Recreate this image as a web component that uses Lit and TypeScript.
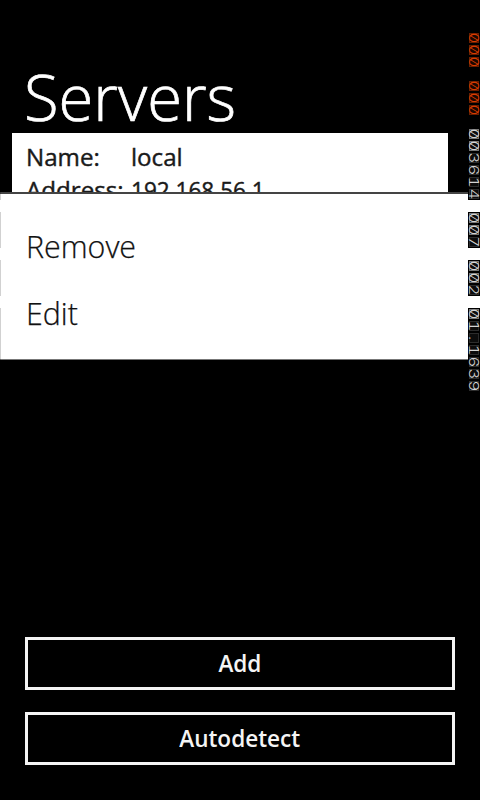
import { LitElement, html, css } from "lit";
import { customElement } from "lit/decorators.js";

type Counter = { value: string; tone: string };

const counters: Counter[] = [
  { value: "000", tone: "hot" },
  { value: "000", tone: "hot" },
  { value: "003614", tone: "" },
  { value: "007", tone: "" },
  { value: "002", tone: "" },
  { value: "01.1639", tone: "" },
];

@customElement("frame-counters")
class FrameCounters extends LitElement {
  static styles = css`
    :host {
      display: flex;
      flex-direction: column;
      gap: 12px;
      width: 12px;
    }
    .counter {
      position: relative;
      display: flex;
      flex-direction: column;
      background: #000;
      color: #d4d4d4;
    }
    .counter::before {
      content: "";
      position: absolute;
      left: -468px;
      top: 0;
      bottom: 0;
      width: 1px;
      background: rgba(0, 0, 0, 0.18);
    }
    .hot {
      color: #d83c00;
    }
    .cell {
      box-sizing: border-box;
      width: 12px;
      height: 12px;
      border: 1px solid #000;
      background: #0c0c0c;
      box-shadow: inset 0 0 0 1px #2c2c2c;
      display: flex;
      align-items: center;
      justify-content: center;
    }
    .zero {
      box-shadow: inset 0 0 0 1px #777;
    }
    .hot .cell {
      background: #1c0700;
      box-shadow: inset 0 0 0 1px #6a1e00;
    }
    .digit {
      font: 300 13px/16px Inter, sans-serif;
      font-feature-settings: "zero", "tnum";
      transform: rotate(90deg) scaleX(1.3);
    }
  `;
  render() {
    return counters.map(
      (c) => html`<div class="counter ${c.tone}">
        ${[...c.value].map(
          (d) => html`<div class="cell ${d === "0" ? "zero" : ""}"><span class="digit">${d}</span></div>`,
        )}
      </div>`,
    );
  }
}

@customElement("app-root")
class AppRoot extends LitElement {
  static styles = css`
    :host {
      display: block;
      position: relative;
      box-sizing: border-box;
      width: 480px;
      height: 800px;
      overflow: hidden;
      background: #000;
      color: #fff;
      font-family: "Open Sans", "Noto Sans", sans-serif;
    }
    .page {
      display: flex;
      flex-direction: column;
      height: 800px;
      box-sizing: border-box;
      padding: 61px 26px 35px 12px;
    }
    .title {
      margin: 0;
      padding-left: 12px;
      height: 72px;
      font-size: 64px;
      font-weight: 300;
      line-height: 72px;
      white-space: nowrap;
      -webkit-text-stroke: 0.7px #fff;
    }
    .title span,
    .fit {
      display: inline-block;
      transform-origin: 0 50%;
    }
    .title span {
      transform: scaleX(0.99);
    }
    .server {
      display: grid;
      grid-template-columns: 105px 1fr;
      grid-auto-rows: 33px;
      box-sizing: border-box;
      width: 436px;
      height: 61px;
      padding: 8px 14px 0;
      overflow: hidden;
      background: #fff;
      color: #1a1a1a;
      font-size: 23px;
      font-weight: 500;
      line-height: 33px;
      white-space: nowrap;
      -webkit-text-stroke: 0.4px #1a1a1a;
    }
    .server .fit {
      justify-self: start;
      transform: scaleX(1.05);
    }
    .server .address {
      transform: scaleX(0.98);
    }
    .menu {
      position: absolute;
      left: 0;
      top: 192px;
      width: 480px;
      height: 168px;
      box-sizing: border-box;
      padding: 19px 26px;
      border-top: 2px solid #444;
      border-bottom: 1px solid #777;
      background: #fff;
      color: #111;
      font-size: 31px;
      font-weight: 300;
      -webkit-text-stroke: 0.25px #111;
    }
    .item {
      height: 67px;
      line-height: 67px;
    }
    .item .fit {
      transform: scaleX(0.98);
    }
    .actions {
      display: flex;
      flex-direction: column;
      gap: 22px;
      margin-top: auto;
      padding-left: 13px;
    }
    .button {
      box-sizing: border-box;
      width: 430px;
      height: 53px;
      padding: 0 0 1px;
      border: 3px solid #f4f4f4;
      background: #000;
      color: #f4f4f4;
      font: 600 23px/46px "Open Sans", sans-serif;
    }
    .button .fit {
      transform: scaleX(0.98);
      transform-origin: 50%;
    }
    frame-counters {
      position: absolute;
      left: 468px;
      top: 32px;
    }
  `;
  render() {
    return html`
      <div class="page">
        <h1 class="title"><span>Servers</span></h1>
        <div class="server">
          <span class="fit">Name:</span><span class="fit">local</span>
          <span class="fit">Address:</span><span class="fit address">192.168.56.1</span>
        </div>
        <div class="actions">
          <button class="button"><span class="fit">Add</span></button>
          <button class="button"><span class="fit">Autodetect</span></button>
        </div>
      </div>
      <div class="menu">
        <div class="item"><span class="fit">Remove</span></div>
        <div class="item"><span class="fit">Edit</span></div>
      </div>
      <frame-counters></frame-counters>
    `;
  }
}
